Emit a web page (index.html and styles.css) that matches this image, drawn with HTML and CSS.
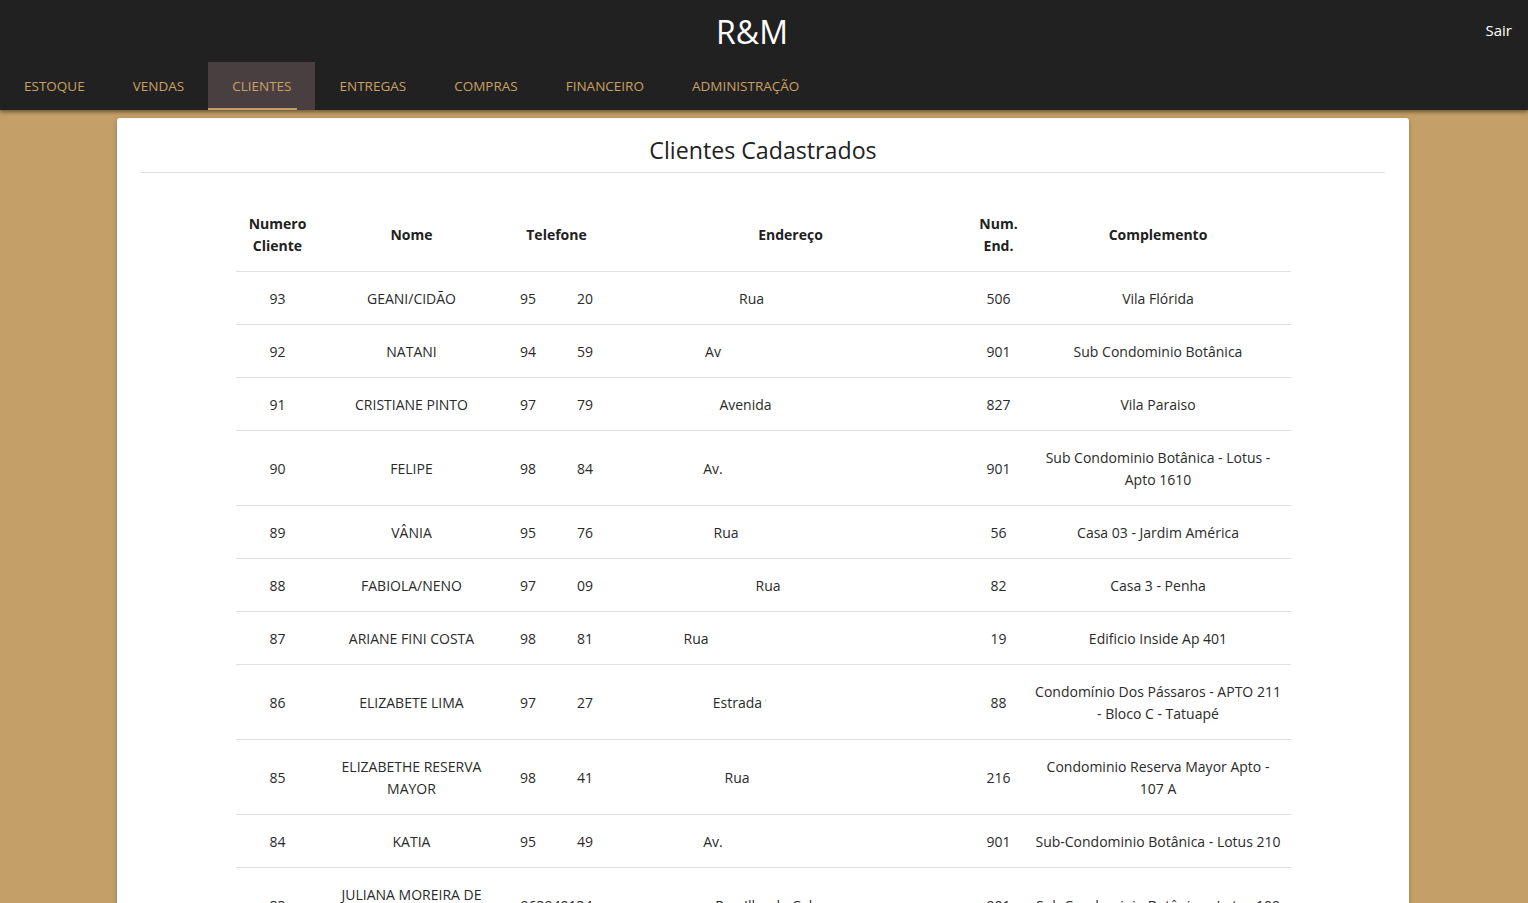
FILE: index.html
```html
<!DOCTYPE html>
<html lang="pt-BR">
<head>
<meta charset="utf-8">
<title>R&amp;M - Clientes</title>
<link rel="stylesheet" href="styles.css">
</head>
<body>
<header class="topbar">
  <div class="brand-row">
    <div class="brand">R&amp;M</div>
    <a class="logout" href="#">Sair</a>
  </div>
  <nav class="tabs">
    <a class="tab" href="#">ESTOQUE</a>
    <a class="tab" href="#">VENDAS</a>
    <a class="tab active" href="#">CLIENTES<span class="ink"></span></a>
    <a class="tab" href="#">ENTREGAS</a>
    <a class="tab" href="#">COMPRAS</a>
    <a class="tab" href="#">FINANCEIRO</a>
    <a class="tab" href="#">ADMINISTRAÇÃO</a>
  </nav>
</header>

<main class="card">
  <h2 class="card-title">Clientes Cadastrados</h2>
  <hr class="divider">
  <table class="clients">
    <colgroup>
      <col class="c-num"><col class="c-name"><col class="c-phone"><col class="c-addr"><col class="c-nend"><col class="c-comp">
    </colgroup>
    <thead>
      <tr>
        <th>Numero Cliente</th>
        <th>Nome</th>
        <th>Telefone</th>
        <th>Endereço</th>
        <th>Num. End.</th>
        <th class="comp">Complemento</th>
      </tr>
    </thead>
    <tbody>
      <tr><td>93</td><td>GEANI/CIDÃO</td><td><span class="ph">95</span><span class="gap"></span><span class="ph">20</span></td><td>Rua<span class="hid" style="width:78px"></span></td><td>506</td><td class="comp">Vila Flórida</td></tr>
      <tr><td>92</td><td>NATANI</td><td><span class="ph">94</span><span class="gap"></span><span class="ph">59</span></td><td>Av<span class="hid" style="width:155px"></span></td><td>901</td><td class="comp">Sub Condominio Botânica</td></tr>
      <tr><td>91</td><td>CRISTIANE PINTO</td><td><span class="ph">97</span><span class="gap"></span><span class="ph">79</span></td><td>Avenida<span class="hid" style="width:90px"></span></td><td>827</td><td class="comp">Vila Paraiso</td></tr>
      <tr><td>90</td><td>FELIPE</td><td><span class="ph">98</span><span class="gap"></span><span class="ph">84</span></td><td>Av.<span class="hid" style="width:155px"></span></td><td>901</td><td class="comp">Sub Condominio Botânica - Lotus - Apto 1610</td></tr>
      <tr><td>89</td><td>VÂNIA</td><td><span class="ph">95</span><span class="gap"></span><span class="ph">76</span></td><td>Rua<span class="hid" style="width:129px"></span></td><td>56</td><td class="comp">Casa 03 - Jardim América</td></tr>
      <tr><td>88</td><td>FABIOLA/NENO</td><td><span class="ph">97</span><span class="gap"></span><span class="ph">09</span></td><td>Rua<span class="hid" style="width:45px"></span></td><td>82</td><td class="comp">Casa 3 - Penha</td></tr>
      <tr><td>87</td><td>ARIANE FINI COSTA</td><td><span class="ph">98</span><span class="gap"></span><span class="ph">81</span></td><td>Rua<span class="hid" style="width:189px"></span></td><td>19</td><td class="comp">Edificio Inside Ap 401</td></tr>
      <tr><td>86</td><td>ELIZABETE LIMA</td><td><span class="ph">97</span><span class="gap"></span><span class="ph">27</span></td><td>Estrada<span class="tick">'</span><span class="hid" style="width:100px"></span></td><td>88</td><td class="comp">Condomínio Dos Pássaros - APTO 211 - Bloco C - Tatuapé</td></tr>
      <tr><td>85</td><td>ELIZABETHE RESERVA MAYOR</td><td><span class="ph">98</span><span class="gap"></span><span class="ph">41</span></td><td>Rua<span class="hid" style="width:107px"></span></td><td>216</td><td class="comp">Condominio Reserva Mayor Apto - 107 A</td></tr>
      <tr><td>84</td><td>KATIA</td><td><span class="ph">95</span><span class="gap"></span><span class="ph">49</span></td><td>Av.<span class="hid" style="width:155px"></span></td><td>901</td><td class="comp">Sub-Condominio Botânica - Lotus 210</td></tr>
      <tr><td>83</td><td>JULIANA MOREIRA DE SOUZA</td><td>963940134</td><td>Rua Ilha do Cabo<span class="hid" style="width:40px"></span></td><td>901</td><td class="comp">Sub Condominio Botânica - Lotus 109</td></tr>
    </tbody>
  </table>
</main>
</body>
</html>
```

FILE: styles.css
```css
html, body {
  margin: 0;
  padding: 0;
}
html {
  overflow: hidden;
}
body {
  background: #c49f67;
  font-family: "Open Sans", "Noto Sans", "Liberation Sans", sans-serif;
  color: #212121;
  height: 903px;
  overflow: hidden;
}

.topbar {
  background: #212121;
  box-shadow: 0 2px 4px rgba(0, 0, 0, 0.45);
  position: relative;
  z-index: 2;
}
.brand-row {
  height: 62px;
  display: flex;
  align-items: center;
  justify-content: center;
  position: relative;
}
.brand {
  color: #ffffff;
  font-size: 32px;
  line-height: 38px;
  margin-top: 1px;
  margin-right: 24px;
}
.logout {
  position: absolute;
  right: 16px;
  top: 19px;
  color: #ffffff;
  text-decoration: none;
  font-size: 15px;
  line-height: 22px;
}

.tabs {
  display: flex;
  height: 48px;
}
.tab {
  position: relative;
  display: flex;
  align-items: center;
  padding: 0 24px 1px;
  color: #c9a063;
  text-decoration: none;
  font-size: 13.5px;
}
.tab.active {
  background: #4a3f40;
}
.tab .ink {
  position: absolute;
  left: 0;
  bottom: 0;
  width: 89px;
  height: 2px;
  background: #c49f67;
}

.card {
  display: block;
  width: 1244px;
  margin: 8px auto 0;
  padding: 14px 24px 0;
  background: #ffffff;
  border-radius: 3px;
  box-shadow: 0 2px 4px rgba(0, 0, 0, 0.25);
  min-height: 900px;
  position: relative;
  left: -1px;
}
.card-title {
  margin: 0;
  text-align: center;
  font-weight: 400;
  font-size: 23.2px;
  line-height: 36px;
  color: #212121;
}
.divider {
  margin: 4px 0 0;
  border: 0;
  border-top: 1px solid #e0e0e0;
}

.clients {
  width: 1055px;
  margin: 24px auto 0;
  border-collapse: collapse;
  table-layout: fixed;
  font-size: 14px;
  line-height: 22px;
}
.c-num { width: 84px; }
.c-name { width: 184px; }
.c-phone { width: 106px; }
.c-addr { width: 362px; }
.c-nend { width: 54px; }
.c-comp { width: 265px; }

.clients th,
.clients td {
  padding: 15.5px 6px 14.5px;
  text-align: center;
  vertical-align: middle;
  border-bottom: 1px solid #e0e0e0;
  color: #212121;
}
.clients th {
  font-weight: 700;
  font-size: 14px;
}
.clients th.comp,
.clients td.comp {
  padding-left: 8px;
  padding-right: 8px;
}
.clients td {
  font-weight: 400;
  color: #2a2a2a;
}
.ph {
  display: inline-block;
}
.gap {
  display: inline-block;
  width: 41px;
}
.hid {
  display: inline-block;
}
.tick {
  display: inline-block;
  color: #c8c8c8;
  font-size: 12px;
  line-height: 12px;
  width: 5px;
  padding-left: 1px;
  vertical-align: middle;
}
```
